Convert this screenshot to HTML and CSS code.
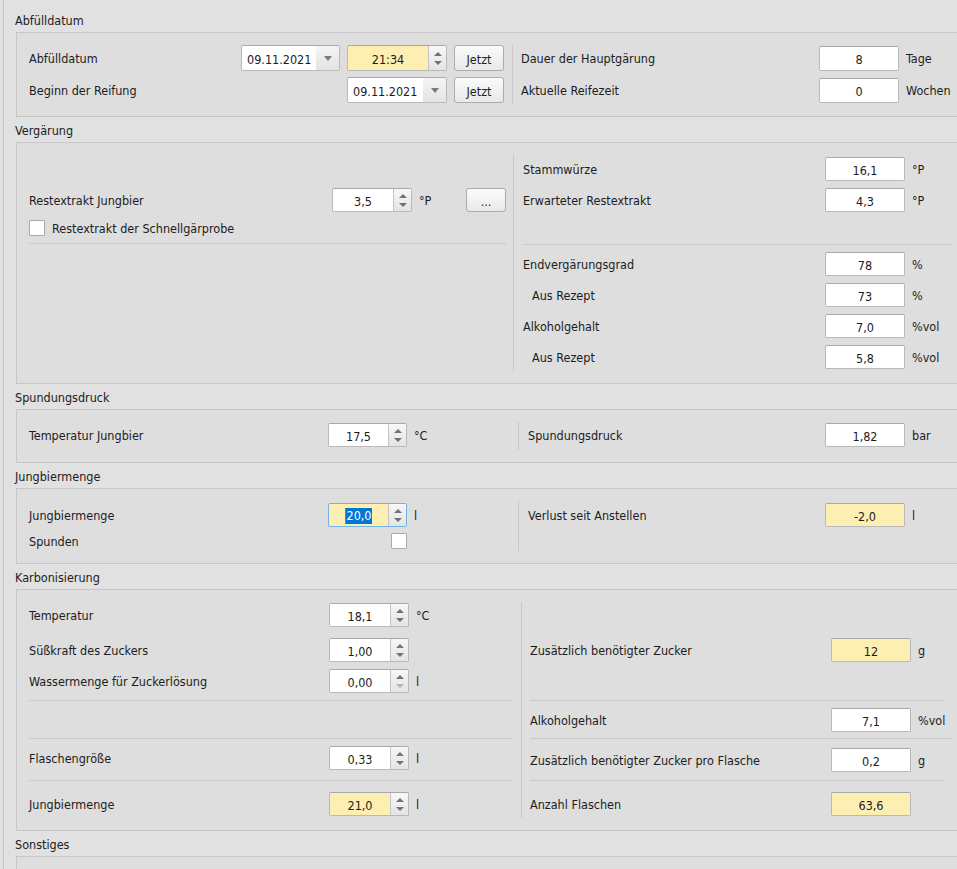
FILE: index.html
```html
<!DOCTYPE html>
<html lang="de">
<head>
  <meta charset="UTF-8" />
  <meta name="viewport" content="width=device-width, initial-scale=1.0" />
  <title>Abfüllen</title>
  <link rel="stylesheet" href="styles.css">
</head>
<body>
  <div class="page">

    <!-- Abfülldatum -->
    <div class="group-title">Abfülldatum</div>
    <div class="group g-dates">
      <div class="col col-left">
        <div class="row">
          <span class="label">Abfülldatum</span>
          <div class="combo"><span class="combo-val">09.11.2021</span><span class="combo-btn"></span></div>
          <div class="spin yellow"><span class="spin-val">21:34</span><span class="spin-btns"><i class="up"></i><i class="down"></i></span></div>
          <button class="push">Jetzt</button>
        </div>
        <div class="row">
          <span class="label">Beginn der Reifung</span>
          <span></span>
          <div class="combo"><span class="combo-val">09.11.2021</span><span class="combo-btn"></span></div>
          <button class="push">Jetzt</button>
        </div>
      </div>
      <div class="col col-right">
        <div class="row">
          <span class="label">Dauer der Hauptgärung</span>
          <div class="field">8</div>
          <span class="unit">Tage</span>
        </div>
        <div class="row">
          <span class="label">Aktuelle Reifezeit</span>
          <div class="field">0</div>
          <span class="unit">Wochen</span>
        </div>
      </div>
    </div>

    <!-- Vergärung -->
    <div class="group-title">Vergärung</div>
    <div class="group g-ferment">
      <div class="col col-left">
        <div class="row"></div>
        <div class="row mt-7">
          <span class="label">Restextrakt Jungbier</span>
          <div class="spin"><span class="spin-val">3,5</span><span class="spin-btns"><i class="up"></i><i class="down"></i></span></div>
          <span class="unit">°P</span>
          <button class="push">...</button>
        </div>
        <label class="check-row mt-8">
          <span class="checkbox"></span>
          <span class="label">Restextrakt der Schnellgärprobe</span>
        </label>
        <div class="hsep mt-7"></div>
      </div>
      <div class="col col-right">
        <div class="row">
          <span class="label">Stammwürze</span>
          <div class="field">16,1</div>
          <span class="unit">°P</span>
        </div>
        <div class="row mt-7">
          <span class="label">Erwarteter Restextrakt</span>
          <div class="field">4,3</div>
          <span class="unit">°P</span>
        </div>
        <div class="hsep mt-32"></div>
        <div class="row mt-7">
          <span class="label">Endvergärungsgrad</span>
          <div class="field">78</div>
          <span class="unit">%</span>
        </div>
        <div class="row mt-7">
          <span class="label indent">Aus Rezept</span>
          <div class="field">73</div>
          <span class="unit">%</span>
        </div>
        <div class="row mt-7">
          <span class="label">Alkoholgehalt</span>
          <div class="field">7,0</div>
          <span class="unit">%vol</span>
        </div>
        <div class="row mt-7">
          <span class="label indent">Aus Rezept</span>
          <div class="field">5,8</div>
          <span class="unit">%vol</span>
        </div>
      </div>
    </div>

    <!-- Spundungsdruck -->
    <div class="group-title">Spundungsdruck</div>
    <div class="group g-bung">
      <div class="col col-left">
        <div class="row">
          <span class="label">Temperatur Jungbier</span>
          <div class="spin"><span class="spin-val">17,5</span><span class="spin-btns"><i class="up"></i><i class="down"></i></span></div>
          <span class="unit">°C</span>
        </div>
      </div>
      <div class="col col-right">
        <div class="row">
          <span class="label">Spundungsdruck</span>
          <div class="field">1,82</div>
          <span class="unit">bar</span>
        </div>
      </div>
    </div>

    <!-- Jungbiermenge -->
    <div class="group-title">Jungbiermenge</div>
    <div class="group g-volume">
      <div class="col col-left">
        <div class="row">
          <span class="label">Jungbiermenge</span>
          <div class="spin yellow focus"><span class="spin-val"><span class="selected">20,0</span></span><span class="spin-btns"><i class="up"></i><i class="down"></i></span></div>
          <span class="unit">l</span>
        </div>
        <div class="row row-check mt-5">
          <span class="label">Spunden</span>
          <span class="checkbox"></span>
          <span></span>
        </div>
      </div>
      <div class="col col-right">
        <div class="row">
          <span class="label">Verlust seit Anstellen</span>
          <div class="field yellow">-2,0</div>
          <span class="unit">l</span>
        </div>
      </div>
    </div>

    <!-- Karbonisierung -->
    <div class="group-title">Karbonisierung</div>
    <div class="group g-carb">
      <div class="col col-left">
        <div class="row">
          <span class="label">Temperatur</span>
          <div class="spin"><span class="spin-val">18,1</span><span class="spin-btns"><i class="up"></i><i class="down"></i></span></div>
          <span class="unit">°C</span>
        </div>
        <div class="row mt-11">
          <span class="label">Süßkraft des Zuckers</span>
          <div class="spin"><span class="spin-val">1,00</span><span class="spin-btns"><i class="up"></i><i class="down"></i></span></div>
          <span class="unit"></span>
        </div>
        <div class="row mt-7">
          <span class="label">Wassermenge für Zuckerlösung</span>
          <div class="spin"><span class="spin-val">0,00</span><span class="spin-btns"><i class="up"></i><i class="down off"></i></span></div>
          <span class="unit">l</span>
        </div>
        <div class="hsep mt-7"></div>
        <div class="hsep mt-37"></div>
        <div class="row mt-7">
          <span class="label">Flaschengröße</span>
          <div class="spin"><span class="spin-val">0,33</span><span class="spin-btns"><i class="up"></i><i class="down"></i></span></div>
          <span class="unit">l</span>
        </div>
        <div class="hsep mt-10"></div>
        <div class="row mt-11">
          <span class="label">Jungbiermenge</span>
          <div class="spin yellow"><span class="spin-val">21,0</span><span class="spin-btns"><i class="up"></i><i class="down"></i></span></div>
          <span class="unit">l</span>
        </div>
      </div>
      <div class="col col-right">
        <div class="row mt-36">
          <span class="label">Zusätzlich benötigter Zucker</span>
          <div class="field yellow">12</div>
          <span class="unit">g</span>
        </div>
        <div class="hsep short mt-38"></div>
        <div class="row mt-7">
          <span class="label">Alkoholgehalt</span>
          <div class="field">7,1</div>
          <span class="unit">%vol</span>
        </div>
        <div class="hsep mt-6"></div>
        <div class="row mt-9">
          <span class="label">Zusätzlich benötigter Zucker pro Flasche</span>
          <div class="field">0,2</div>
          <span class="unit">g</span>
        </div>
        <div class="hsep short mt-8"></div>
        <div class="row mt-11">
          <span class="label">Anzahl Flaschen</span>
          <div class="field yellow">63,6</div>
          <span class="unit"></span>
        </div>
      </div>
    </div>

    <!-- Sonstiges -->
    <div class="group-title">Sonstiges</div>
    <div class="group g-misc"></div>

  </div>
</body>
</html>
```

FILE: styles.css
```css
body {
  margin: 0;
  padding: 0;
  background-color: #e1e1e1;
  font-family: Tahoma, "DejaVu Sans Condensed", sans-serif;
  font-size: 12.5px;
  color: #1c1c22;
  overflow: hidden;
}
.page {
  margin-left: 3px;
  border-left: 1px solid #c3c3c3;
  padding: 7px 0 0 12px;
  height: 869px;
  box-sizing: border-box;
}
.group-title {
  height: 25px;
  box-sizing: border-box;
  padding-top: 6px;
  line-height: 16px;
  margin-left: -1px;
}
.group {
  width: 949px;
  box-sizing: border-box;
  border: 1px solid #c6c6c6;
  background-color: #dedede;
  padding: 12px;
  display: flex;
}
.col {
  display: flex;
  flex-direction: column;
  box-sizing: border-box;
}
.col-right {
  flex: 1;
  border-left: 1px solid #c8c8c8;
}
.row {
  display: grid;
  align-items: center;
  column-gap: 7px;
  height: 24px;
}
.label,
.unit {
  white-space: nowrap;
  line-height: 16px;
  padding-top: 2px;
}
.label.indent {
  padding-left: 9px;
}
.hsep {
  height: 1px;
  background-color: #c8c8c8;
  flex: none;
}
.hsep.short {
  margin-right: 7px;
}

/* spacing */
.mt-5 { margin-top: 5px; }
.mt-6 { margin-top: 6px; }
.mt-7 { margin-top: 7px; }
.mt-8 { margin-top: 8px; }
.mt-9 { margin-top: 9px; }
.mt-10 { margin-top: 10px; }
.mt-11 { margin-top: 11px; }
.mt-32 { margin-top: 32px; }
.mt-36 { margin-top: 36px; }
.mt-37 { margin-top: 37px; }
.mt-38 { margin-top: 38px; }

/* widgets */
.field {
  height: 24px;
  box-sizing: border-box;
  border: 1px solid #b9b9b9;
  border-top-color: #a9a9a9;
  border-radius: 2px;
  background-color: #fff;
  display: flex;
  align-items: center;
  justify-content: center;
  padding-top: 2px;
}
.yellow {
  background-color: #fdeeb2;
}
.spin {
  height: 24px;
  box-sizing: border-box;
  border: 1px solid #b9b9b9;
  border-top-color: #a9a9a9;
  border-radius: 2px;
  background-color: #fff;
  display: flex;
  overflow: hidden;
}
.spin.yellow {
  background-color: #fdeeb2;
}
.spin.focus {
  border-color: #70b2ea;
}
.spin-val {
  flex: 1;
  display: flex;
  align-items: center;
  justify-content: center;
  padding-top: 2px;
}
.selected {
  background-color: #0078d7;
  color: #fff;
  line-height: 16px;
  border-left: 1px solid #e06010;
}
.spin-btns {
  width: 17px;
  flex: none;
  border-left: 1px solid #c4c4c4;
  background: linear-gradient(#f7f7f7, #e4e4e4);
  display: flex;
  flex-direction: column;
  align-items: center;
  justify-content: center;
  gap: 5px;
}
.spin-btns i {
  width: 0;
  height: 0;
  border-left: 4px solid transparent;
  border-right: 4px solid transparent;
}
.spin-btns .up {
  border-bottom: 4px solid #727272;
}
.spin-btns .down {
  border-top: 4px solid #727272;
}
.spin-btns .down.off {
  border-top-color: #b4b4b4;
}
.combo {
  height: 26px;
  box-sizing: border-box;
  border: 1px solid #b9b9b9;
  border-top-color: #a9a9a9;
  border-radius: 2px;
  background-color: #fff;
  display: flex;
  overflow: hidden;
}
.combo-val {
  flex: 1;
  display: flex;
  align-items: center;
  padding: 2px 0 0 5px;
}
.combo-btn {
  width: 23px;
  flex: none;
  background: linear-gradient(#f5f5f5, #e3e3e3);
  display: flex;
  align-items: center;
  justify-content: center;
}
.combo-btn::before {
  content: "";
  border-left: 4px solid transparent;
  border-right: 4px solid transparent;
  border-top: 5px solid #7a7a7a;
}
.push {
  height: 24px;
  box-sizing: border-box;
  border: 1px solid #acacac;
  border-radius: 3px;
  background: linear-gradient(#fbfbfb, #e9e9e9);
  font-family: inherit;
  font-size: 12.5px;
  color: #1c1c22;
  padding: 2px 0 0 0;
}
.checkbox {
  width: 16px;
  height: 16px;
  box-sizing: border-box;
  border: 1px solid #aaaaaa;
  border-radius: 1px;
  background-color: #fff;
  flex: none;
}
.check-row {
  display: flex;
  align-items: center;
  gap: 7px;
  height: 16px;
}
.check-row .label {
  padding-top: 1px;
}

/* Abfülldatum */
.g-dates {
  padding-bottom: 13px;
}
.g-dates .col {
  gap: 6px;
}
.g-dates .col-left {
  width: 475px;
  margin-right: 8px;
}
.g-dates .col-right {
  padding-left: 8px;
}
.g-dates .row {
  height: 26px;
}
.g-dates .col-left .row {
  grid-template-columns: 1fr 99px 100px 50px;
}
.g-dates .col-left .spin {
  height: 26px;
}
.g-dates .col-left .push {
  height: 26px;
}
.g-dates .col-right .row {
  grid-template-columns: 1fr 80px 46px;
}
.g-dates .field {
  height: 25px;
}

/* Vergärung */
.g-ferment .col {
  padding-top: 2px;
  padding-bottom: 2px;
}
.g-ferment .col-left {
  width: 477px;
  margin-right: 7px;
}
.g-ferment .col-left .row {
  grid-template-columns: 1fr 80px 40px 40px;
}
.g-ferment .col-right {
  padding-left: 9px;
}
.g-ferment .col-right .row {
  grid-template-columns: 1fr 80px 40px;
}

/* Spundungsdruck / Jungbiermenge */
.g-bung .col {
  padding-top: 1px;
  padding-bottom: 3px;
}
.g-volume .col {
  padding-top: 2px;
  padding-bottom: 2px;
}
.g-bung .col-left,
.g-volume .col-left {
  width: 482px;
  margin-right: 7px;
}
.g-bung .col-left .row,
.g-volume .col-left .row {
  grid-template-columns: 292px 79px 1fr;
}
.g-bung .col-right,
.g-volume .col-right {
  padding-left: 9px;
}
.g-bung .col-right .row,
.g-volume .col-right .row {
  grid-template-columns: 1fr 80px 40px;
}
.row.row-check {
  height: 17px;
}
.row-check .checkbox {
  justify-self: end;
}

/* Karbonisierung */
.g-carb .col {
  padding-bottom: 2px;
}
.g-carb .col-left {
  width: 484px;
  margin-right: 8px;
  padding-top: 1px;
}
.g-carb .col-left .row {
  grid-template-columns: 293px 80px 1fr;
}
.g-carb .col-right {
  padding-left: 8px;
}
.g-carb .col-right .row {
  grid-template-columns: 1fr 80px 34px;
}

/* Sonstiges */
.g-misc {
  height: 40px;
}
```
